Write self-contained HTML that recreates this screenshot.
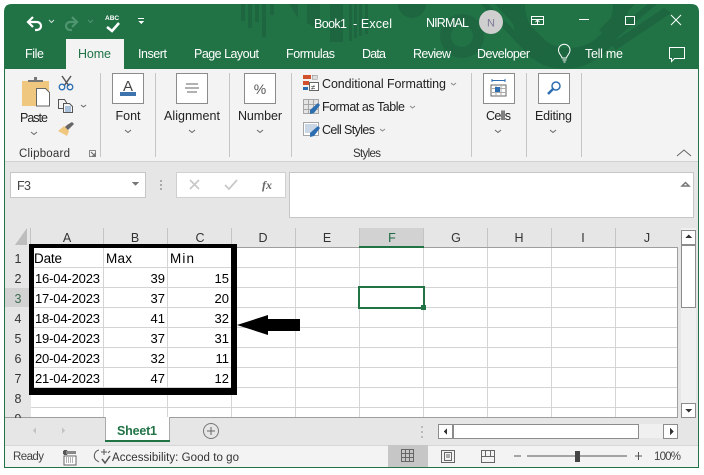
<!DOCTYPE html>
<html><head><meta charset="utf-8"><style>
html,body{margin:0;padding:0;background:#fff;width:704px;height:475px;overflow:hidden}
svg{display:block}
text{font-family:"Liberation Sans",sans-serif;font-size:12.5px;fill:#222}
.w{fill:#fff}
.c{fill:#000;font-size:13px}
.d{fill:#000;font-size:13.5px}
.h{fill:#333;font-size:12.5px;text-anchor:middle}
.m{text-anchor:middle}
</style></head><body>
<svg width="704" height="475" viewBox="0 0 704 475" xmlns="http://www.w3.org/2000/svg" shape-rendering="crispEdges">
<rect width="704" height="475" fill="#fff"/>
<!-- window -->
<path d="M4 12Q4 4 12 4H691Q699 4 699 12V468H4Z" fill="#217346" shape-rendering="auto"/>
<rect x="5" y="69" width="693" height="398" fill="#e6e6e6"/>
<!-- title pattern -->
<g fill="#1e6640" shape-rendering="auto">
<path d="M241 4h4v17h-4zM248 4h4v24h-4zM255 4h4v18h-4zM262 4h4v33h-4zM270 4h4v11h-4z"/>
<path d="M289 4h9v14z"/>
<path d="M307 4h13v26l-13-7zM330 4h13v38h-13z"/>
<path d="M349 4h3v37h-3zM354 4h3v34h-3zM359 4h3v32h-3zM365 4h3v30h-3z"/>
<path d="M398 4h28a14 14 0 0 1-28 0z"/>
<path fill-rule="evenodd" d="M462 14a22 22 0 1 0 .1 0zM462 25a11 11 0 1 1-.1 0z" opacity=".9"/>
<path d="M495 4l14 0 40 40-9 9zM481 4h7l50 50-6 5z"/>
<path d="M510 4h15a42 42 0 0 0 88 0h16c-3 34-30 65-65 65s-52-30-54-65z" opacity=".95"/>
<path d="M625 4h10l-31 31-5-5zM648 4h9l-50 42-5-5zM664 8l7 5-55 37-6-6z"/>
</g>
<!-- QAT -->
<g fill="none" stroke="#fff" stroke-width="2.2" shape-rendering="auto">
<path d="M33 17l-5 5 5 5"/>
<path d="M28 22h9a4 4 0 0 1 0 8h-2"/>
<g stroke="#4f9670"><path d="M72 17l5 5-5 5"/><path d="M77 22h-7a4 4 0 0 0 0 8h2"/></g>
<path d="M107 27l5 4 7-8" stroke-width="2.6"/>
</g>
<path d="M49 20l2.500 2.500 2.500-2.500" fill="none" stroke="#cfe0d6" stroke-width="1" shape-rendering="auto"/>
<path d="M88 20l2.500 2.500 2.500-2.500" fill="none" stroke="#4f9670" stroke-width="1" shape-rendering="auto"/>
<text x="105" y="20" class="w" style="font-size:6.500px;font-weight:bold">ABC</text>
<rect x="138" y="18" width="6" height="1" fill="#fff"/><path d="M138 21h6l-3 3z" fill="#fff"/>
<text x="314" y="28" class="w" textLength="33">Book1</text>
<text x="353" y="28" class="w" textLength="39">-  Excel</text>
<text x="426" y="27" class="w" textLength="43">NIRMAL</text>
<circle cx="491" cy="22" r="12" fill="#cfcfcf" shape-rendering="auto"/>
<text x="491" y="26.500" class="m" style="fill:#7c7a99;font-size:11px">N</text>
<!-- window btns -->
<g fill="none" stroke="#fff" stroke-width="1">
<path d="M531.500 16.500h12v8h-12zM531.500 19.500h12"/>
<path d="M537.500 24v-4M535.500 22l2-2 2 2" shape-rendering="auto"/>
<path d="M579 19.500h10"/><path d="M625.500 16.500h9v8h-9z"/>
<path d="M671 15l10 10M681 15l-10 10" shape-rendering="auto"/>
</g>
<!-- tabs -->
<rect x="66" y="39" width="58" height="30" fill="#f3f3f3"/>
<text x="25" y="58" class="w" textLength="19">File</text>
<text x="78" y="58" style="fill:#217346" textLength="33">Home</text>
<text x="138" y="58" class="w" textLength="29">Insert</text>
<text x="194" y="58" class="w" textLength="65">Page Layout</text>
<text x="286" y="58" class="w" textLength="49">Formulas</text>
<text x="362" y="58" class="w" textLength="24">Data</text>
<text x="413" y="58" class="w" textLength="38">Review</text>
<text x="477" y="58" class="w" textLength="53">Developer</text>
<g fill="none" stroke="#fff" stroke-width="1" shape-rendering="auto">
<path d="M562 58c-.5-3-3.500-4-3.500-8a5.700 5.700 0 0 1 11.500 0c0 4-3 5-3.500 8zM562.500 60h4M563.500 62h2"/>
<path d="M669.500 47.500h15v11h-10l-3 3v-3h-2z"/>
</g>
<text x="585" y="58" class="w" textLength="38">Tell me</text>
<!-- ribbon -->
<rect x="5" y="69" width="693" height="92" fill="#f3f3f3"/>
<rect x="5" y="161" width="693" height="1" fill="#d2d2d2"/>
<g fill="#c6c6c6"><rect x="100" y="73" width="1" height="84"/><rect x="155" y="73" width="1" height="84"/><rect x="229" y="73" width="1" height="84"/><rect x="291" y="73" width="1" height="84"/><rect x="471" y="73" width="1" height="84"/><rect x="526" y="73" width="1" height="84"/><rect x="581" y="73" width="1" height="84"/></g>
<!-- paste -->
<rect x="22" y="81" width="27" height="25" fill="#efc77f"/>
<path d="M28 82v-2h6v-3h3v3h6v2z" fill="#777"/>
<path d="M36.500 88.500h9l4 4v13.500h-13z" fill="#fff" stroke="#666" shape-rendering="auto"/>
<text x="20" y="122" textLength="28">Paste</text>
<path d="M31 132l3 2.500 3-2.500M125 130l3 2.500 3-2.500M189 130l3 2.500 3-2.500M257 130l3 2.500 3-2.500M495 130l3 2.500 3-2.500M550 130l3 2.500 3-2.500M81 105l2.500 2 2.500-2" fill="none" stroke="#666" shape-rendering="auto"/>
<g fill="none" shape-rendering="auto">
<path d="M62 76l7 10M71 76l-7 10" stroke="#555" stroke-width="1.500"/>
<circle cx="62" cy="87" r="2.800" stroke="#2d6eb0" stroke-width="1.300"/><circle cx="70" cy="87" r="2.800" stroke="#2d6eb0" stroke-width="1.300"/>
<path d="M58.500 99.500h6l2 3v6h-8z" stroke="#555" fill="#f3f3f3"/>
<path d="M63.500 103.500h6l3 3v6h-9z" stroke="#555" fill="#f3f3f3"/>
<path d="M65 107h6M65 109h6M65 111h6" stroke="#2d6eb0" stroke-width=".8"/>
<path d="M58 131l6-5 5 5-2 5z" fill="#efc77f" stroke="none"/>
<path d="M65 127l2-2 3 3-2 2zM67 125l5-3 2 2-4 4z" fill="#666" stroke="none"/>
</g>
<text x="19" y="157" style="font-size:11.500px;fill:#333" textLength="51">Clipboard</text>
<path d="M89.500 150.500h6v6h-6z" fill="none" stroke="#888"/><path d="M91 152l3.500 3.500M95 153v3h-3" fill="none" stroke="#666" shape-rendering="auto"/>
<!-- group buttons -->
<g fill="#fff" stroke="#8c8c8c"><rect x="112.500" y="73.500" width="31" height="30"/><rect x="176.500" y="73.500" width="31" height="30"/><rect x="244.500" y="73.500" width="31" height="30"/><rect x="483.500" y="73.500" width="31" height="30"/><rect x="538.500" y="73.500" width="31" height="30"/></g>
<text x="128" y="91" class="m" style="font-size:15px;fill:#444">A</text><rect x="120" y="92" width="16" height="4" fill="#3d74ae"/>
<path d="M186 84h12M185 88h14M187 92h10" stroke="#666" fill="none"/>
<text x="260" y="94" class="m" style="font-size:14px;fill:#555">%</text>
<rect x="491" y="85" width="15" height="11" fill="#fff" stroke="#666"/>
<path d="M491 88.500h15M491 92.500h15M496 85v11M501 85v11" stroke="#aaa"/>
<rect x="495" y="87" width="5" height="5" fill="#2d6eb0"/>
<path d="M492 80.500h13M492 79v3M505 79v3" stroke="#2d6eb0"/>
<g fill="none" stroke="#2d6eb0" shape-rendering="auto"><circle cx="556" cy="86" r="4" stroke-width="1.500"/><path d="M553 89l-5 5" stroke-width="2.500"/></g>
<text x="128" y="120" class="m" textLength="25">Font</text>
<text x="192" y="120" class="m" textLength="56">Alignment</text>
<text x="260" y="120" class="m" textLength="44">Number</text>
<text x="498.500" y="120" class="m" textLength="25">Cells</text>
<text x="553.500" y="120" class="m" textLength="37">Editing</text>
<!-- styles -->
<rect x="303" y="75" width="8" height="4" fill="#d0512b"/><rect x="303" y="81" width="6" height="4" fill="#d0512b"/><rect x="303" y="87" width="5" height="3" fill="#2d6eb0"/>
<rect x="312" y="75" width="5" height="4" fill="#ddd" stroke="#888" stroke-width=".5"/>
<rect x="309.500" y="82.500" width="9" height="8" fill="#fff" stroke="#666"/>
<text x="311" y="90" style="font-size:8px;fill:#444">≠</text>
<rect x="303.500" y="99.500" width="15" height="14" fill="#e4e4e4"/>
<path d="M303.500 99.500h15v14h-15zM303.500 104.500h15M303.500 109.500h15M308.500 99.500v14M313.500 99.500v14" fill="none" stroke="#a6a6a6"/>
<path d="M310 110l8-7 2 2-6 8-4 1z" fill="#2d6eb0" shape-rendering="auto"/>
<rect x="303.500" y="122.500" width="15" height="13" fill="#fff" stroke="#a6a6a6"/><rect x="305" y="124" width="12" height="9" fill="#c9d6e6"/>
<path d="M310 133l8-7 2 2-6 8-4 1z" fill="#2d6eb0" shape-rendering="auto"/>
<text x="322" y="88" textLength="124">Conditional Formatting</text>
<text x="322" y="111" textLength="83">Format as Table</text>
<text x="322" y="134" textLength="53">Cell Styles</text>
<path d="M451 83l2.500 2 2.500-2M410 106l2.500 2 2.500-2M380 129l2.500 2 2.500-2" fill="none" stroke="#888" shape-rendering="auto"/>
<text x="367" y="157" class="m" style="font-size:11.500px;fill:#333" textLength="28">Styles</text>
<path d="M677 156l7-6 7 6" fill="none" stroke="#666" shape-rendering="auto"/>
<!-- formula bar -->
<rect x="10.500" y="172.500" width="135" height="25" fill="#fff" stroke="#c6c6c6"/>
<text x="17" y="190" style="fill:#444" textLength="14">F3</text>
<path d="M132 182h7l-3.500 4z" fill="#777"/>
<g fill="#aaa"><rect x="160" y="180" width="2" height="2"/><rect x="160" y="184" width="2" height="2"/><rect x="160" y="188" width="2" height="2"/></g>
<rect x="176.500" y="172.500" width="109" height="25" fill="#fff" stroke="#d0d0d0"/>
<path d="M190 180l9 9M199 180l-9 9M225 185l4 4 8-9" fill="none" stroke="#c8c8c8" stroke-width="1.700" shape-rendering="auto"/>
<text x="262" y="189" style="font-family:'Liberation Serif',serif;font-style:italic;font-weight:bold;font-size:12px;fill:#666">fx</text>
<rect x="289.500" y="172.500" width="404" height="45" fill="#fff" stroke="#c6c6c6"/>
<path d="M682 186l3.500-3.500 3.500 3.500z" fill="none" stroke="#777" stroke-width="1.500" shape-rendering="auto"/>
<!-- grid -->
<rect x="31" y="248" width="646" height="169" fill="#fff"/>
<rect x="5" y="248" width="26" height="169" fill="#e6e6e6"/>
<rect x="360" y="228" width="64" height="19" fill="#d2d2d2"/>
<rect x="5" y="288" width="26" height="19" fill="#d2d2d2"/>
<path d="M27 228v17H15z" fill="#bdbdbd"/>
<g fill="#d4d4d4">
<rect x="31" y="267" width="646" height="1"/><rect x="31" y="287" width="646" height="1"/><rect x="31" y="307" width="646" height="1"/><rect x="31" y="327" width="646" height="1"/><rect x="31" y="347" width="646" height="1"/><rect x="31" y="367" width="646" height="1"/><rect x="31" y="387" width="646" height="1"/><rect x="31" y="407" width="646" height="1"/>
<rect x="103" y="248" width="1" height="169"/><rect x="167" y="248" width="1" height="169"/><rect x="231" y="248" width="1" height="169"/><rect x="295" y="248" width="1" height="169"/><rect x="359" y="248" width="1" height="169"/><rect x="423" y="248" width="1" height="169"/><rect x="487" y="248" width="1" height="169"/><rect x="551" y="248" width="1" height="169"/><rect x="615" y="248" width="1" height="169"/>
</g>
<g fill="#c4c4c4"><rect x="30" y="228" width="1" height="19"/><rect x="103" y="228" width="1" height="19"/><rect x="167" y="228" width="1" height="19"/><rect x="231" y="228" width="1" height="19"/><rect x="295" y="228" width="1" height="19"/><rect x="359" y="228" width="1" height="19"/><rect x="423" y="228" width="1" height="19"/><rect x="487" y="228" width="1" height="19"/><rect x="551" y="228" width="1" height="19"/><rect x="615" y="228" width="1" height="19"/></g>
<rect x="31" y="247" width="646" height="1" fill="#9e9e9e"/>
<rect x="677" y="247" width="1" height="171" fill="#9e9e9e"/>
<rect x="5" y="417" width="673" height="1" fill="#9e9e9e"/>
<rect x="359" y="246" width="65" height="2" fill="#217346"/>
<text x="67" y="242" class="h">A</text><text x="135" y="242" class="h">B</text><text x="200" y="242" class="h">C</text><text x="263" y="242" class="h">D</text><text x="327" y="242" class="h">E</text><text x="392" y="242" class="h" style="fill:#1c6a41">F</text><text x="456" y="242" class="h">G</text><text x="519" y="242" class="h">H</text><text x="583" y="242" class="h">I</text><text x="647" y="242" class="h">J</text>
<text x="18" y="263" class="h">1</text><text x="18" y="283" class="h">2</text><text x="18" y="303" class="h" style="fill:#3d6b52">3</text><text x="18" y="323" class="h">4</text><text x="18" y="343" class="h">5</text><text x="18" y="363" class="h">6</text><text x="18" y="383" class="h">7</text><text x="18" y="403" class="h">8</text><text x="18" y="423" class="h">9</text>
<!-- cells -->
<text x="34" y="263" class="d" textLength="28">Date</text><text x="106" y="263" class="d" textLength="26">Max</text><text x="170" y="263" class="d" textLength="24">Min</text>
<text x="35" y="283" class="c" textLength="65">16-04-2023</text><text x="35" y="303" class="c" textLength="65">17-04-2023</text><text x="35" y="323" class="c" textLength="65">18-04-2023</text><text x="35" y="343" class="c" textLength="65">19-04-2023</text><text x="35" y="363" class="c" textLength="65">20-04-2023</text><text x="35" y="383" class="c" textLength="65">21-04-2023</text>
<g style="text-anchor:end"><text x="165" y="283" class="c">39</text><text x="165" y="303" class="c">37</text><text x="165" y="323" class="c">41</text><text x="165" y="343" class="c">37</text><text x="165" y="363" class="c">32</text><text x="165" y="383" class="c">47</text>
<text x="229" y="283" class="c">15</text><text x="229" y="303" class="c">20</text><text x="229" y="323" class="c">32</text><text x="229" y="343" class="c">31</text><text x="229" y="363" class="c">11</text><text x="229" y="383" class="c">12</text></g>
<!-- selection -->
<rect x="359" y="287" width="65" height="21" fill="none" stroke="#217346" stroke-width="2"/>
<rect x="421" y="305" width="5" height="5" fill="#217346"/>
<!-- annotation -->
<path d="M29 244h208v151H29zM34 248v140h197V248z" fill="#000" fill-rule="evenodd"/>
<path d="M237 325l31-10v4h32v12h-32v4z" fill="#000" shape-rendering="auto"/>
<!-- vertical scroll -->
<rect x="681" y="228" width="15" height="190" fill="#f0f0f0"/>
<rect x="681.500" y="230.500" width="14" height="14" fill="#fff" stroke="#8c8c8c"/>
<path d="M685 238h7l-3.500-3.500z" fill="#333"/>
<rect x="681.500" y="245.500" width="14" height="62" fill="#fff" stroke="#8c8c8c"/>
<rect x="681.500" y="403.500" width="14" height="14" fill="#fff" stroke="#8c8c8c"/>
<path d="M685 409h7l-3.500 3.500z" fill="#333"/>
<!-- sheet tab bar -->
<rect x="5" y="418" width="693" height="27" fill="#e6e6e6"/>
<rect x="105" y="417" width="65" height="25" fill="#fff"/>
<rect x="105" y="417" width="1" height="25" fill="#aaa"/><rect x="169" y="417" width="1" height="25" fill="#aaa"/>
<rect x="105" y="440" width="65" height="2" fill="#217346"/>
<text x="117" y="435" style="fill:#217346;font-weight:bold" textLength="40">Sheet1</text>
<path d="M36 427v7l-3-3.500zM62 427v7l3-3.500z" fill="#c4c4c4"/>
<circle cx="211" cy="431" r="7.500" fill="none" stroke="#777" shape-rendering="auto"/><path d="M207 431h8M211 427v8" stroke="#666" fill="none"/>
<g fill="#bbb"><rect x="421" y="426" width="2" height="2"/><rect x="421" y="431" width="2" height="2"/><rect x="421" y="436" width="2" height="2"/></g>
<rect x="439" y="424" width="238" height="14" fill="#f0f0f0"/>
<rect x="438.500" y="424.500" width="14" height="14" fill="#fff" stroke="#8c8c8c"/>
<path d="M447 428v7l-3.500-3.500z" fill="#333"/>
<rect x="453.500" y="424.500" width="185" height="14" fill="#fff" stroke="#8c8c8c"/>
<rect x="663.500" y="424.500" width="14" height="14" fill="#fff" stroke="#8c8c8c"/>
<path d="M670 428v7l3.500-3.500z" fill="#333"/>
<!-- status bar -->
<rect x="5" y="445" width="693" height="22" fill="#f3f3f3"/>
<rect x="5" y="445" width="693" height="1" fill="#d6d6d6"/>
<text x="13" y="460" style="font-size:11.500px;fill:#444" textLength="31">Ready</text>
<rect x="63" y="450" width="5" height="5" fill="#555" rx="2"/><rect x="64" y="456" width="12" height="9" fill="#fff" stroke="#666" stroke-width=".7"/><path d="M66 451h10v3h-10z" fill="#888"/><path d="M66 458h8M66 460h8M66 462h8" stroke="#666" stroke-dasharray="1 1"/>
<g fill="none" stroke="#555" shape-rendering="auto"><path d="M99 450a6 6 0 0 0-3 10l3 2M104 449v6M101 452h6M110 451l-2 2"/><path d="M102 459l3 4 5-7" stroke-width="1.500"/></g>
<text x="112" y="461" style="font-size:11.500px;fill:#333" textLength="127">Accessibility: Good to go</text>
<rect x="388" y="445" width="40" height="22" fill="#c6c6c6"/>
<path d="M401.500 449.500h12v12h-12zM401.500 453.500h12M401.500 457.500h12M405.500 449.500v12M409.500 449.500v12" fill="none" stroke="#666"/>
<path d="M441.500 450.500h13v12h-13z" fill="none" stroke="#666"/><path d="M444.500 452.500h7v8h-7zM446 455h4M446 457h4" fill="none" stroke="#666"/>
<path d="M481.500 450.500h13v12h-13zM481.500 456.500h13M485.500 450.500v6M490.500 450.500v6" fill="none" stroke="#666"/>
<path d="M514 456h7M527 456h100M635 456h7M638.500 452v8" stroke="#555" fill="none"/>
<rect x="575" y="451" width="5" height="11" fill="#444"/>
<text x="654" y="460" style="font-size:11.500px;fill:#444" textLength="27">100%</text>
<!-- borders -->
<rect x="4" y="467" width="695" height="1" fill="#217346"/>
<rect x="4" y="69" width="1" height="399" fill="#217346"/><rect x="698" y="69" width="1" height="399" fill="#217346"/>
</svg>
</body></html>
